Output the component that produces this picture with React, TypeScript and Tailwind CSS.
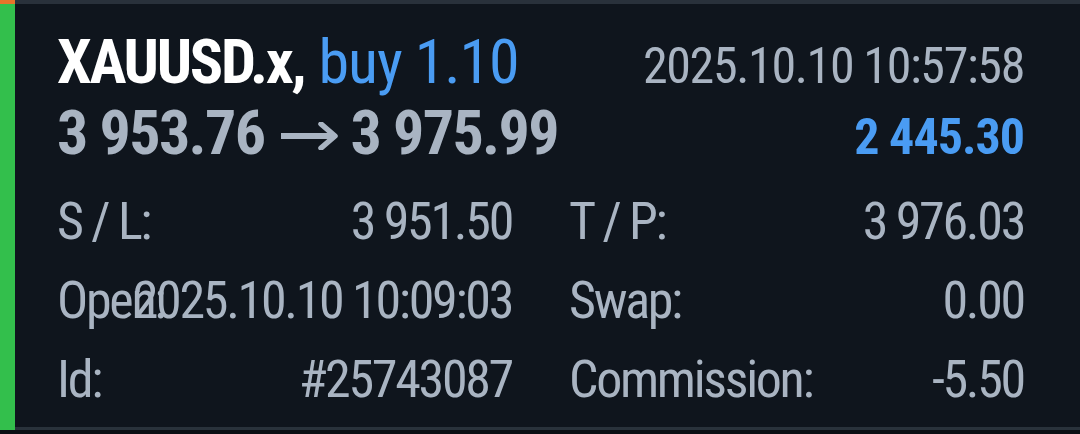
export default function App() {
  const rows = [
    [
      { label: "S / L:", value: "3 951.50" },
      { label: "T / P:", value: "3 976.03" },
    ],
    [
      { label: "Open:", value: "2025.10.10 10:09:03" },
      { label: "Swap:", value: "0.00" },
    ],
    [
      { label: "Id:", value: "#25743087" },
      { label: "Commission:", value: "-5.50" },
    ],
  ]

  return (
    <div className="w-[1080px] h-[434px] overflow-hidden bg-[#0a0e13] flex flex-col [font-family:Roboto,'Noto_Sans',sans-serif] [font-stretch:75%]">
      <div className="flex h-[430px]">
        {/* status bar */}
        <div className="w-[15px] shrink-0 flex flex-col">
          <div className="h-1 bg-[#e8742a]" />
          <div className="flex-1 bg-[#33bf4c]" />
        </div>

        <div className="flex-1 min-w-0 flex flex-col">
          <div className="h-1 bg-[#29313b]" />

          <div className="flex-1 bg-[#0f151d] pl-[42px] pr-[56px] pt-[25px]">
            {/* header */}
            <div className="flex items-baseline justify-between leading-[65px]">
              <div className="text-[62px] whitespace-nowrap">
                <span className="font-bold text-white tracking-[-2.3px]">XAUUSD.x,</span>{" "}
                <span className="text-[#4a9cf3] tracking-[-1.1px]">buy 1.10</span>
              </div>
              <div className="text-[50px] text-[#a9b4c2] whitespace-nowrap tracking-[-1.35px]">
                2025.10.10 10:57:58
              </div>
            </div>
            <div className="flex items-baseline justify-between leading-[67px]">
              <div className="flex items-center text-[62px] font-bold text-[#a9b4c2] whitespace-nowrap tracking-[-1.6px]">
                <span>3 953.76</span>
                <svg className="ml-[16px] mr-[13px] mt-[6px]" width="57" height="28" viewBox="0 0 57 28" fill="none">
                  <line x1="0" y1="14" x2="54" y2="14" stroke="#a9b4c2" strokeWidth="6" />
                  <polyline
                    points="40,2 54,14 40,26"
                    stroke="#a9b4c2"
                    strokeWidth="5.5"
                    strokeLinecap="round"
                    strokeLinejoin="round"
                  />
                </svg>
                <span>3 975.99</span>
              </div>
              <div className="text-[50px] font-bold text-[#4a9cf3] whitespace-nowrap tracking-[-1px]">2 445.30</div>
            </div>

            {/* details */}
            <div className="mt-[11px] grid grid-cols-2 gap-x-[57px] text-[52px] leading-[79px] text-[#a9b4c2] tracking-[-2.3px]">
              {rows.flat().map((cell) => (
                <div key={cell.label} className="grid grid-cols-[minmax(0,1fr)]">
                  <span className="col-start-1 row-start-1 justify-self-start whitespace-nowrap">{cell.label}</span>
                  <span className="col-start-1 row-start-1 justify-self-end whitespace-nowrap">{cell.value}</span>
                </div>
              ))}
            </div>
          </div>

          <div className="h-[3px] bg-[#29323b]" />
        </div>
      </div>
    </div>
  )
}
